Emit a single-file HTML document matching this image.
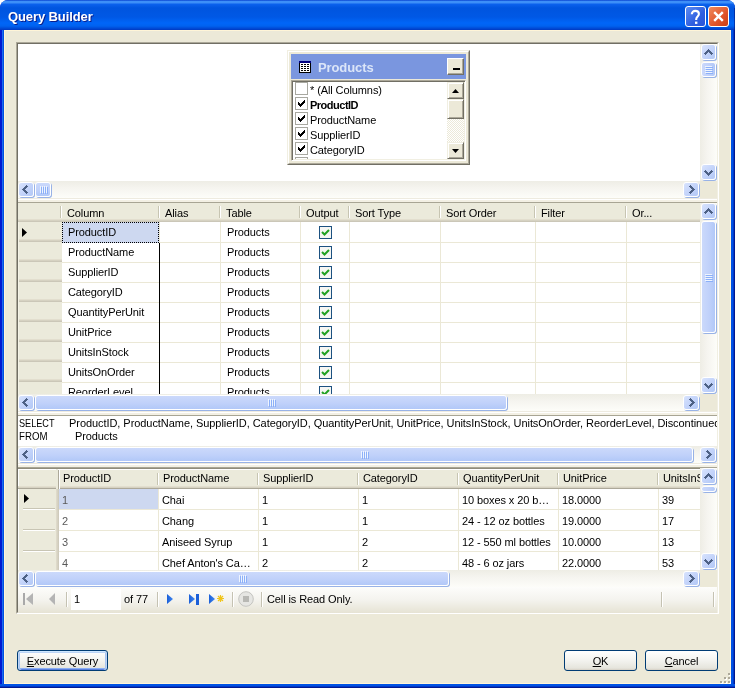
<!DOCTYPE html><html><head><meta charset="utf-8"><style>
*{margin:0;padding:0;box-sizing:border-box}
html,body{width:735px;height:688px;overflow:hidden;background:#fff}
body{position:relative;will-change:transform;font-family:"Liberation Sans",sans-serif;font-size:11px;color:#000}
div{position:absolute}
.t{white-space:pre;line-height:12px;letter-spacing:-0.1px}
.sb .sbi{border:1px solid #fff;border-radius:3px;background:linear-gradient(135deg,#d8e3fd 0%,#c4d4fa 50%,#b2c8f6 100%);box-shadow:1px 1px 0 #98b2e6}
.sb .sbi.th{background:linear-gradient(to bottom,#cbd9fb,#c0d1fa 55%,#b1c8f8)}
.sb .sbi.tv{background:linear-gradient(to right,#cbd9fb,#c0d1fa 55%,#b1c8f8)}
.vtrack{background:linear-gradient(to right,#eeede5,#f5f4ef 40%,#fdfdf9)}
.htrack{background:linear-gradient(to bottom,#eeede5,#f5f4ef 40%,#fdfdf9)}
.hdr{background:#ebeadb;border-bottom:3px solid #d6d2c2}
.btn{border:1px solid #003c74;border-radius:3px;background:linear-gradient(to bottom,#fff 0%,#f3f3ef 50%,#e6e5dd 90%,#d6d0c5 100%);text-align:center;line-height:19px}
</style></head><body><div style="left:0px;top:0px;width:735px;height:688px;background:linear-gradient(to right,#0019d0 0,#0019d0 2px,#1a6af0 2px,#1a6af0 3px,#0050e0 3px,#0050e0 731px,#0052e4 731px,#0052e4 733px,#0038c8 733px,#0038c8 734px,#001890 734px);border-radius:8px 8px 0 0;"></div><div style="left:0px;top:684px;width:735px;height:4px;background:linear-gradient(to bottom,#0052e4 0,#0052e4 2px,#0038c8 2px,#0038c8 3px,#001890 3px);"></div><div style="left:0px;top:0px;width:735px;height:30px;border-radius:8px 8px 0 0;background:linear-gradient(to bottom,#0842d0 0px,#3d8ff8 1.5px,#3d8ff8 2.5px,#0a60ec 4.5px,#0055df 8px,#0058e5 17px,#0066f8 23px,#0062f0 26px,#0044cf 29px,#0038c0 30px);"></div><div style="left:734px;top:8px;width:1px;height:22px;background:rgba(0,16,120,0.55);"></div><div style="left:4px;top:30px;width:727px;height:654px;background:#ece9d8;border:1px solid #fff5d8;"></div><div class="t" style="left:8px;top:9px;font-size:13px;font-weight:bold;color:#fff;line-height:15px;text-shadow:1px 1px 0 #0a1e8c;">Query Builder</div><div style="left:685px;top:6px;width:21px;height:21px;border:1px solid #fff;border-radius:3px;background:linear-gradient(135deg,#5c8cf2,#2f5fe0 60%,#2a55d8);"><svg width="19" height="19" viewBox="0 0 19 19" style="position:absolute;left:0;top:0"><path d="M5.8 7.2 C5.8 5 7.4 3.9 9.3 3.9 C11.4 3.9 12.9 5.1 12.9 7 C12.9 9.3 10.2 9.6 10.2 12.2 V13" fill="none" stroke="#fff" stroke-width="2.1"/><rect x="9" y="14.6" width="2.4" height="2.3" fill="#fff"/></svg></div><div style="left:708px;top:6px;width:21px;height:21px;border:1px solid #fff;border-radius:3px;background:linear-gradient(135deg,#f08a5c,#e0542a 60%,#cc3e14);"><svg width="19" height="19" viewBox="0 0 19 19" style="position:absolute;left:0;top:0"><path d="M5.2 5.2 L13.8 13.8 M13.8 5.2 L5.2 13.8" stroke="#fff" stroke-width="2.4"/></svg></div><div style="left:16px;top:42px;width:703px;height:572px;border-top:1px solid #aca899;border-left:1px solid #aca899;border-right:1px solid #fff;border-bottom:1px solid #fff;"></div><div style="left:17px;top:43px;width:701px;height:570px;border-top:1px solid #716f64;border-left:1px solid #716f64;border-right:1px solid #f1efe2;border-bottom:1px solid #f1efe2;background:#ece9d8;"></div><div style="left:18px;top:44px;width:699px;height:137px;background:#fff;"></div><div class="vtrack" style="left:700px;top:44px;width:17px;height:137px;"></div><div class="sb" style="left:700px;top:44px;width:17px;height:17px;"><div class="sbi" style="left:1px;top:0;width:15px;height:16px;"></div><div style="left:4px;top:5px;width:9px;height:6px"><svg width="9" height="6" viewBox="0 0 9 6" style="position:absolute;left:0;top:0"><g fill="#4d6185" shape-rendering="crispEdges"><rect x="4" y="0" width="1" height="1"/><rect x="3" y="1" width="1" height="1"/><rect x="4" y="1" width="1" height="1"/><rect x="5" y="1" width="1" height="1"/><rect x="2" y="2" width="1" height="1"/><rect x="3" y="2" width="1" height="1"/><rect x="4" y="2" width="1" height="1"/><rect x="5" y="2" width="1" height="1"/><rect x="6" y="2" width="1" height="1"/><rect x="1" y="3" width="1" height="1"/><rect x="2" y="3" width="1" height="1"/><rect x="3" y="3" width="1" height="1"/><rect x="5" y="3" width="1" height="1"/><rect x="6" y="3" width="1" height="1"/><rect x="7" y="3" width="1" height="1"/><rect x="0" y="4" width="1" height="1"/><rect x="1" y="4" width="1" height="1"/><rect x="2" y="4" width="1" height="1"/><rect x="6" y="4" width="1" height="1"/><rect x="7" y="4" width="1" height="1"/><rect x="8" y="4" width="1" height="1"/><rect x="1" y="5" width="1" height="1"/><rect x="7" y="5" width="1" height="1"/></g></svg></div></div><div class="sb" style="left:700px;top:164px;width:17px;height:17px;"><div class="sbi" style="left:1px;top:0;width:15px;height:16px;"></div><div style="left:4px;top:6px;width:9px;height:6px"><svg width="9" height="6" viewBox="0 0 9 6" style="position:absolute;left:0;top:0"><g fill="#4d6185" shape-rendering="crispEdges"><rect x="1" y="0" width="1" height="1"/><rect x="7" y="0" width="1" height="1"/><rect x="0" y="1" width="1" height="1"/><rect x="1" y="1" width="1" height="1"/><rect x="2" y="1" width="1" height="1"/><rect x="6" y="1" width="1" height="1"/><rect x="7" y="1" width="1" height="1"/><rect x="8" y="1" width="1" height="1"/><rect x="1" y="2" width="1" height="1"/><rect x="2" y="2" width="1" height="1"/><rect x="3" y="2" width="1" height="1"/><rect x="5" y="2" width="1" height="1"/><rect x="6" y="2" width="1" height="1"/><rect x="7" y="2" width="1" height="1"/><rect x="2" y="3" width="1" height="1"/><rect x="3" y="3" width="1" height="1"/><rect x="4" y="3" width="1" height="1"/><rect x="5" y="3" width="1" height="1"/><rect x="6" y="3" width="1" height="1"/><rect x="3" y="4" width="1" height="1"/><rect x="4" y="4" width="1" height="1"/><rect x="5" y="4" width="1" height="1"/><rect x="4" y="5" width="1" height="1"/></g></svg></div></div><div class="sb" style="left:700px;top:62px;width:17px;height:16px;"><div class="sbi tv" style="left:1px;top:0;width:15px;height:15px;"></div><div style="left:5px;top:4px;width:8px;height:8px"><svg width="8" height="8" viewBox="0 0 8 8" style="position:absolute;left:0;top:0"><g shape-rendering="crispEdges"><path d="M0 0.5h7M0 2.5h7M0 4.5h7M0 6.5h7" stroke="#eef4fe" stroke-width="1"/><path d="M1 1.5h7M1 3.5h7M1 5.5h7M1 7.5h7" stroke="#8cb0f8" stroke-width="1"/></g></svg></div></div><div class="htrack" style="left:18px;top:181px;width:682px;height:17px;"></div><div class="sb" style="left:18px;top:181px;width:17px;height:17px;"><div class="sbi" style="left:0;top:1px;width:16px;height:15px;"></div><div style="left:4px;top:4px;width:6px;height:9px"><svg width="6" height="9" viewBox="0 0 6 9" style="position:absolute;left:0;top:0"><g fill="#4d6185" shape-rendering="crispEdges"><rect x="4" y="0" width="1" height="1"/><rect x="3" y="1" width="1" height="1"/><rect x="4" y="1" width="1" height="1"/><rect x="5" y="1" width="1" height="1"/><rect x="2" y="2" width="1" height="1"/><rect x="3" y="2" width="1" height="1"/><rect x="4" y="2" width="1" height="1"/><rect x="1" y="3" width="1" height="1"/><rect x="2" y="3" width="1" height="1"/><rect x="3" y="3" width="1" height="1"/><rect x="0" y="4" width="1" height="1"/><rect x="1" y="4" width="1" height="1"/><rect x="2" y="4" width="1" height="1"/><rect x="1" y="5" width="1" height="1"/><rect x="2" y="5" width="1" height="1"/><rect x="3" y="5" width="1" height="1"/><rect x="2" y="6" width="1" height="1"/><rect x="3" y="6" width="1" height="1"/><rect x="4" y="6" width="1" height="1"/><rect x="3" y="7" width="1" height="1"/><rect x="4" y="7" width="1" height="1"/><rect x="5" y="7" width="1" height="1"/><rect x="4" y="8" width="1" height="1"/></g></svg></div></div><div class="sb" style="left:683px;top:181px;width:17px;height:17px;"><div class="sbi" style="left:0;top:1px;width:16px;height:15px;"></div><div style="left:6px;top:4px;width:6px;height:9px"><svg width="6" height="9" viewBox="0 0 6 9" style="position:absolute;left:0;top:0"><g fill="#4d6185" shape-rendering="crispEdges"><rect x="1" y="0" width="1" height="1"/><rect x="0" y="1" width="1" height="1"/><rect x="1" y="1" width="1" height="1"/><rect x="2" y="1" width="1" height="1"/><rect x="1" y="2" width="1" height="1"/><rect x="2" y="2" width="1" height="1"/><rect x="3" y="2" width="1" height="1"/><rect x="2" y="3" width="1" height="1"/><rect x="3" y="3" width="1" height="1"/><rect x="4" y="3" width="1" height="1"/><rect x="3" y="4" width="1" height="1"/><rect x="4" y="4" width="1" height="1"/><rect x="5" y="4" width="1" height="1"/><rect x="2" y="5" width="1" height="1"/><rect x="3" y="5" width="1" height="1"/><rect x="4" y="5" width="1" height="1"/><rect x="1" y="6" width="1" height="1"/><rect x="2" y="6" width="1" height="1"/><rect x="3" y="6" width="1" height="1"/><rect x="0" y="7" width="1" height="1"/><rect x="1" y="7" width="1" height="1"/><rect x="2" y="7" width="1" height="1"/><rect x="1" y="8" width="1" height="1"/></g></svg></div></div><div class="sb" style="left:35px;top:181px;width:17px;height:17px;"><div class="sbi th" style="left:0;top:1px;width:16px;height:15px;"></div><div style="left:5px;top:5px;width:8px;height:8px"><svg width="8" height="8" viewBox="0 0 8 8" style="position:absolute;left:0;top:0"><g shape-rendering="crispEdges"><path d="M0.5 0v7M2.5 0v7M4.5 0v7M6.5 0v7" stroke="#eef4fe" stroke-width="1"/><path d="M1.5 1v7M3.5 1v7M5.5 1v7M7.5 1v7" stroke="#8cb0f8" stroke-width="1"/></g></svg></div></div><div style="left:700px;top:181px;width:17px;height:17px;background:#ece9d8;"></div><div style="left:18px;top:198px;width:699px;height:1px;background:#eeebe0;"></div><div style="left:18px;top:199px;width:699px;height:1px;background:#fff;"></div><div style="left:18px;top:200px;width:699px;height:2px;background:#f3f0e4;"></div><div style="left:18px;top:202px;width:699px;height:1px;background:#a8a594;"></div><div style="left:287px;top:50px;width:183px;height:115px;background:#ece9d8;border-top:1px solid #f1efe2;border-left:1px solid #f1efe2;border-right:1px solid #716f64;border-bottom:1px solid #716f64;"></div><div style="left:288px;top:51px;width:181px;height:113px;border-top:1px solid #fff;border-left:1px solid #fff;border-right:1px solid #aca899;border-bottom:1px solid #aca899;"></div><div style="left:291px;top:54px;width:175px;height:25px;background:#7a96df;"></div><svg style="position:absolute;left:299px;top:61px" width="12" height="12" viewBox="0 0 12 12" shape-rendering="crispEdges"><rect x="0" y="0" width="12" height="12" fill="#000"/><rect x="1" y="2" width="10" height="9" fill="#fff"/><rect x="0" y="0" width="12" height="2" fill="#000080"/><g fill="#000"><rect x="2" y="3" width="2" height="1"/><rect x="2" y="5" width="2" height="1"/><rect x="2" y="7" width="2" height="1"/><rect x="2" y="9" width="2" height="1"/><rect x="5" y="3" width="2" height="1"/><rect x="5" y="5" width="2" height="1"/><rect x="5" y="7" width="2" height="1"/><rect x="5" y="9" width="2" height="1"/><rect x="8" y="3" width="2" height="1"/><rect x="8" y="5" width="2" height="1"/><rect x="8" y="7" width="2" height="1"/><rect x="8" y="9" width="2" height="1"/></g></svg><div class="t" style="left:318px;top:60px;font-size:13px;font-weight:bold;color:#dbe5f8;line-height:15px;">Products</div><div style="left:447px;top:58px;width:17px;height:17px;background:#ece9d8;border-top:1px solid #fff;border-left:1px solid #fff;border-right:1px solid #716f64;border-bottom:1px solid #716f64;box-shadow:inset -1px -1px 0 #aca899;"><div style="left:5px;top:9px;width:7px;height:2px;background:#000"></div></div><div style="left:291px;top:80px;width:175px;height:81px;background:#fff;border-top:1px solid #aca899;border-left:1px solid #aca899;border-right:1px solid #fff;border-bottom:1px solid #fff;box-shadow:inset 1px 1px 0 #716f64,inset -1px -1px 0 #f1efe2;"></div><div style="left:293px;top:82px;width:154px;height:77px;overflow:hidden;"><div style="left:2px;top:0px;width:13px;height:13px;overflow:hidden"><svg width="13" height="13" viewBox="0 0 13 13"><rect x="0.5" y="0.5" width="12" height="12" fill="#fff" stroke="#a8a8a0"/></svg></div><div class="t" style="left:17px;top:2px;">* (All Columns)</div><div style="left:2px;top:15px;width:13px;height:13px;overflow:hidden"><svg width="13" height="13" viewBox="0 0 13 13"><rect x="0.5" y="0.5" width="12" height="12" fill="#fff" stroke="#a8a8a0"/><g fill="#000" shape-rendering="crispEdges"><rect x="9" y="3" width="1" height="1"/><rect x="8" y="4" width="1" height="1"/><rect x="9" y="4" width="1" height="1"/><rect x="3" y="5" width="1" height="1"/><rect x="7" y="5" width="1" height="1"/><rect x="8" y="5" width="1" height="1"/><rect x="9" y="5" width="1" height="1"/><rect x="3" y="6" width="1" height="1"/><rect x="4" y="6" width="1" height="1"/><rect x="6" y="6" width="1" height="1"/><rect x="7" y="6" width="1" height="1"/><rect x="8" y="6" width="1" height="1"/><rect x="3" y="7" width="1" height="1"/><rect x="4" y="7" width="1" height="1"/><rect x="5" y="7" width="1" height="1"/><rect x="6" y="7" width="1" height="1"/><rect x="7" y="7" width="1" height="1"/><rect x="4" y="8" width="1" height="1"/><rect x="5" y="8" width="1" height="1"/><rect x="6" y="8" width="1" height="1"/><rect x="5" y="9" width="1" height="1"/></g></svg></div><div class="t" style="left:17px;top:17px;font-weight:bold;letter-spacing:-0.5px;">ProductID</div><div style="left:2px;top:30px;width:13px;height:13px;overflow:hidden"><svg width="13" height="13" viewBox="0 0 13 13"><rect x="0.5" y="0.5" width="12" height="12" fill="#fff" stroke="#a8a8a0"/><g fill="#000" shape-rendering="crispEdges"><rect x="9" y="3" width="1" height="1"/><rect x="8" y="4" width="1" height="1"/><rect x="9" y="4" width="1" height="1"/><rect x="3" y="5" width="1" height="1"/><rect x="7" y="5" width="1" height="1"/><rect x="8" y="5" width="1" height="1"/><rect x="9" y="5" width="1" height="1"/><rect x="3" y="6" width="1" height="1"/><rect x="4" y="6" width="1" height="1"/><rect x="6" y="6" width="1" height="1"/><rect x="7" y="6" width="1" height="1"/><rect x="8" y="6" width="1" height="1"/><rect x="3" y="7" width="1" height="1"/><rect x="4" y="7" width="1" height="1"/><rect x="5" y="7" width="1" height="1"/><rect x="6" y="7" width="1" height="1"/><rect x="7" y="7" width="1" height="1"/><rect x="4" y="8" width="1" height="1"/><rect x="5" y="8" width="1" height="1"/><rect x="6" y="8" width="1" height="1"/><rect x="5" y="9" width="1" height="1"/></g></svg></div><div class="t" style="left:17px;top:32px;">ProductName</div><div style="left:2px;top:45px;width:13px;height:13px;overflow:hidden"><svg width="13" height="13" viewBox="0 0 13 13"><rect x="0.5" y="0.5" width="12" height="12" fill="#fff" stroke="#a8a8a0"/><g fill="#000" shape-rendering="crispEdges"><rect x="9" y="3" width="1" height="1"/><rect x="8" y="4" width="1" height="1"/><rect x="9" y="4" width="1" height="1"/><rect x="3" y="5" width="1" height="1"/><rect x="7" y="5" width="1" height="1"/><rect x="8" y="5" width="1" height="1"/><rect x="9" y="5" width="1" height="1"/><rect x="3" y="6" width="1" height="1"/><rect x="4" y="6" width="1" height="1"/><rect x="6" y="6" width="1" height="1"/><rect x="7" y="6" width="1" height="1"/><rect x="8" y="6" width="1" height="1"/><rect x="3" y="7" width="1" height="1"/><rect x="4" y="7" width="1" height="1"/><rect x="5" y="7" width="1" height="1"/><rect x="6" y="7" width="1" height="1"/><rect x="7" y="7" width="1" height="1"/><rect x="4" y="8" width="1" height="1"/><rect x="5" y="8" width="1" height="1"/><rect x="6" y="8" width="1" height="1"/><rect x="5" y="9" width="1" height="1"/></g></svg></div><div class="t" style="left:17px;top:47px;">SupplierID</div><div style="left:2px;top:60px;width:13px;height:13px;overflow:hidden"><svg width="13" height="13" viewBox="0 0 13 13"><rect x="0.5" y="0.5" width="12" height="12" fill="#fff" stroke="#a8a8a0"/><g fill="#000" shape-rendering="crispEdges"><rect x="9" y="3" width="1" height="1"/><rect x="8" y="4" width="1" height="1"/><rect x="9" y="4" width="1" height="1"/><rect x="3" y="5" width="1" height="1"/><rect x="7" y="5" width="1" height="1"/><rect x="8" y="5" width="1" height="1"/><rect x="9" y="5" width="1" height="1"/><rect x="3" y="6" width="1" height="1"/><rect x="4" y="6" width="1" height="1"/><rect x="6" y="6" width="1" height="1"/><rect x="7" y="6" width="1" height="1"/><rect x="8" y="6" width="1" height="1"/><rect x="3" y="7" width="1" height="1"/><rect x="4" y="7" width="1" height="1"/><rect x="5" y="7" width="1" height="1"/><rect x="6" y="7" width="1" height="1"/><rect x="7" y="7" width="1" height="1"/><rect x="4" y="8" width="1" height="1"/><rect x="5" y="8" width="1" height="1"/><rect x="6" y="8" width="1" height="1"/><rect x="5" y="9" width="1" height="1"/></g></svg></div><div class="t" style="left:17px;top:62px;">CategoryID</div><div style="left:2px;top:75px;width:13px;height:13px;overflow:hidden"><svg width="13" height="13" viewBox="0 0 13 13"><rect x="0.5" y="0.5" width="12" height="12" fill="#fff" stroke="#a8a8a0"/><g fill="#000" shape-rendering="crispEdges"><rect x="9" y="3" width="1" height="1"/><rect x="8" y="4" width="1" height="1"/><rect x="9" y="4" width="1" height="1"/><rect x="3" y="5" width="1" height="1"/><rect x="7" y="5" width="1" height="1"/><rect x="8" y="5" width="1" height="1"/><rect x="9" y="5" width="1" height="1"/><rect x="3" y="6" width="1" height="1"/><rect x="4" y="6" width="1" height="1"/><rect x="6" y="6" width="1" height="1"/><rect x="7" y="6" width="1" height="1"/><rect x="8" y="6" width="1" height="1"/><rect x="3" y="7" width="1" height="1"/><rect x="4" y="7" width="1" height="1"/><rect x="5" y="7" width="1" height="1"/><rect x="6" y="7" width="1" height="1"/><rect x="7" y="7" width="1" height="1"/><rect x="4" y="8" width="1" height="1"/><rect x="5" y="8" width="1" height="1"/><rect x="6" y="8" width="1" height="1"/><rect x="5" y="9" width="1" height="1"/></g></svg></div></div><div style="left:447px;top:82px;width:17px;height:77px;background-color:#f5f4ee;background-image:repeating-conic-gradient(#ece9d8 0 25%,#fff 0 50%);background-size:2px 2px;"></div><div style="left:447px;top:82px;width:17px;height:17px;background:#ece9d8;border-top:1px solid #f1efe2;border-left:1px solid #f1efe2;border-right:1px solid #716f64;border-bottom:1px solid #716f64;box-shadow:inset 1px 1px 0 #fff,inset -1px -1px 0 #aca899;"><svg style="position:absolute;left:4px;top:6px" width="7" height="4" viewBox="0 0 7 4"><path d="M3.5 0 L7 4 L0 4Z" fill="#000"/></svg></div><div style="left:447px;top:99px;width:17px;height:20px;background:#ece9d8;border-top:1px solid #f1efe2;border-left:1px solid #f1efe2;border-right:1px solid #716f64;border-bottom:1px solid #716f64;box-shadow:inset 1px 1px 0 #fff,inset -1px -1px 0 #aca899;"></div><div style="left:447px;top:142px;width:17px;height:17px;background:#ece9d8;border-top:1px solid #f1efe2;border-left:1px solid #f1efe2;border-right:1px solid #716f64;border-bottom:1px solid #716f64;box-shadow:inset 1px 1px 0 #fff,inset -1px -1px 0 #aca899;"><svg style="position:absolute;left:4px;top:6px" width="7" height="4" viewBox="0 0 7 4"><path d="M0 0 L7 0 L3.5 4Z" fill="#000"/></svg></div><div style="left:18px;top:203px;width:682px;height:191px;overflow:hidden;"><div style="left:0px;top:0px;width:682px;height:191px;background:#fff;"></div><div style="left:0px;top:0px;width:682px;height:16px;background:#ebeadb;"></div><div style="left:0px;top:16px;width:682px;height:1px;background:#e2dece;"></div><div style="left:0px;top:17px;width:682px;height:1px;background:#d6d2c2;"></div><div style="left:0px;top:18px;width:682px;height:1px;background:#cbc7b8;"></div><div style="left:42px;top:3px;width:1px;height:12px;background:#c7c5b2;"></div><div style="left:43px;top:3px;width:1px;height:12px;background:#fff;"></div><div class="t" style="left:49px;top:4px;">Column</div><div style="left:140px;top:3px;width:1px;height:12px;background:#c7c5b2;"></div><div style="left:141px;top:3px;width:1px;height:12px;background:#fff;"></div><div class="t" style="left:147px;top:4px;">Alias</div><div style="left:201px;top:3px;width:1px;height:12px;background:#c7c5b2;"></div><div style="left:202px;top:3px;width:1px;height:12px;background:#fff;"></div><div class="t" style="left:208px;top:4px;">Table</div><div style="left:281px;top:3px;width:1px;height:12px;background:#c7c5b2;"></div><div style="left:282px;top:3px;width:1px;height:12px;background:#fff;"></div><div class="t" style="left:288px;top:4px;">Output</div><div style="left:330px;top:3px;width:1px;height:12px;background:#c7c5b2;"></div><div style="left:331px;top:3px;width:1px;height:12px;background:#fff;"></div><div class="t" style="left:337px;top:4px;">Sort Type</div><div style="left:421px;top:3px;width:1px;height:12px;background:#c7c5b2;"></div><div style="left:422px;top:3px;width:1px;height:12px;background:#fff;"></div><div class="t" style="left:428px;top:4px;">Sort Order</div><div style="left:516px;top:3px;width:1px;height:12px;background:#c7c5b2;"></div><div style="left:517px;top:3px;width:1px;height:12px;background:#fff;"></div><div class="t" style="left:523px;top:4px;">Filter</div><div style="left:607px;top:3px;width:1px;height:12px;background:#c7c5b2;"></div><div style="left:608px;top:3px;width:1px;height:12px;background:#fff;"></div><div class="t" style="left:614px;top:4px;">Or...</div><div style="left:0px;top:19px;width:44px;height:20px;background:#ebeadb;"></div><div style="left:0px;top:19px;width:1px;height:20px;background:#f5f3e6;"></div><div style="left:1px;top:36px;width:43px;height:1px;background:#e2dece;"></div><div style="left:1px;top:37px;width:43px;height:1px;background:#d6d2c2;"></div><div style="left:1px;top:38px;width:43px;height:1px;background:#cbc7b8;"></div><div style="left:44px;top:39px;width:638px;height:1px;background:#ebe8d6;"></div><div class="t" style="left:50px;top:23px;">ProductID</div><div class="t" style="left:209px;top:23px;">Products</div><div style="left:301px;top:23px;width:13px;height:13px"><svg width="13" height="13" viewBox="0 0 13 13"><rect x="0.5" y="0.5" width="12" height="12" fill="#f6f6f3" stroke="#1c5180"/><path d="M3 6 L5.5 8.5 L10 4" fill="none" stroke="#21a121" stroke-width="2"/></svg></div><div style="left:0px;top:39px;width:44px;height:20px;background:#ebeadb;"></div><div style="left:0px;top:39px;width:1px;height:20px;background:#f5f3e6;"></div><div style="left:1px;top:56px;width:43px;height:1px;background:#e2dece;"></div><div style="left:1px;top:57px;width:43px;height:1px;background:#d6d2c2;"></div><div style="left:1px;top:58px;width:43px;height:1px;background:#cbc7b8;"></div><div style="left:44px;top:59px;width:638px;height:1px;background:#ebe8d6;"></div><div class="t" style="left:50px;top:43px;">ProductName</div><div class="t" style="left:209px;top:43px;">Products</div><div style="left:301px;top:43px;width:13px;height:13px"><svg width="13" height="13" viewBox="0 0 13 13"><rect x="0.5" y="0.5" width="12" height="12" fill="#f6f6f3" stroke="#1c5180"/><path d="M3 6 L5.5 8.5 L10 4" fill="none" stroke="#21a121" stroke-width="2"/></svg></div><div style="left:0px;top:59px;width:44px;height:20px;background:#ebeadb;"></div><div style="left:0px;top:59px;width:1px;height:20px;background:#f5f3e6;"></div><div style="left:1px;top:76px;width:43px;height:1px;background:#e2dece;"></div><div style="left:1px;top:77px;width:43px;height:1px;background:#d6d2c2;"></div><div style="left:1px;top:78px;width:43px;height:1px;background:#cbc7b8;"></div><div style="left:44px;top:79px;width:638px;height:1px;background:#ebe8d6;"></div><div class="t" style="left:50px;top:63px;">SupplierID</div><div class="t" style="left:209px;top:63px;">Products</div><div style="left:301px;top:63px;width:13px;height:13px"><svg width="13" height="13" viewBox="0 0 13 13"><rect x="0.5" y="0.5" width="12" height="12" fill="#f6f6f3" stroke="#1c5180"/><path d="M3 6 L5.5 8.5 L10 4" fill="none" stroke="#21a121" stroke-width="2"/></svg></div><div style="left:0px;top:79px;width:44px;height:20px;background:#ebeadb;"></div><div style="left:0px;top:79px;width:1px;height:20px;background:#f5f3e6;"></div><div style="left:1px;top:96px;width:43px;height:1px;background:#e2dece;"></div><div style="left:1px;top:97px;width:43px;height:1px;background:#d6d2c2;"></div><div style="left:1px;top:98px;width:43px;height:1px;background:#cbc7b8;"></div><div style="left:44px;top:99px;width:638px;height:1px;background:#ebe8d6;"></div><div class="t" style="left:50px;top:83px;">CategoryID</div><div class="t" style="left:209px;top:83px;">Products</div><div style="left:301px;top:83px;width:13px;height:13px"><svg width="13" height="13" viewBox="0 0 13 13"><rect x="0.5" y="0.5" width="12" height="12" fill="#f6f6f3" stroke="#1c5180"/><path d="M3 6 L5.5 8.5 L10 4" fill="none" stroke="#21a121" stroke-width="2"/></svg></div><div style="left:0px;top:99px;width:44px;height:20px;background:#ebeadb;"></div><div style="left:0px;top:99px;width:1px;height:20px;background:#f5f3e6;"></div><div style="left:1px;top:116px;width:43px;height:1px;background:#e2dece;"></div><div style="left:1px;top:117px;width:43px;height:1px;background:#d6d2c2;"></div><div style="left:1px;top:118px;width:43px;height:1px;background:#cbc7b8;"></div><div style="left:44px;top:119px;width:638px;height:1px;background:#ebe8d6;"></div><div class="t" style="left:50px;top:103px;">QuantityPerUnit</div><div class="t" style="left:209px;top:103px;">Products</div><div style="left:301px;top:103px;width:13px;height:13px"><svg width="13" height="13" viewBox="0 0 13 13"><rect x="0.5" y="0.5" width="12" height="12" fill="#f6f6f3" stroke="#1c5180"/><path d="M3 6 L5.5 8.5 L10 4" fill="none" stroke="#21a121" stroke-width="2"/></svg></div><div style="left:0px;top:119px;width:44px;height:20px;background:#ebeadb;"></div><div style="left:0px;top:119px;width:1px;height:20px;background:#f5f3e6;"></div><div style="left:1px;top:136px;width:43px;height:1px;background:#e2dece;"></div><div style="left:1px;top:137px;width:43px;height:1px;background:#d6d2c2;"></div><div style="left:1px;top:138px;width:43px;height:1px;background:#cbc7b8;"></div><div style="left:44px;top:139px;width:638px;height:1px;background:#ebe8d6;"></div><div class="t" style="left:50px;top:123px;">UnitPrice</div><div class="t" style="left:209px;top:123px;">Products</div><div style="left:301px;top:123px;width:13px;height:13px"><svg width="13" height="13" viewBox="0 0 13 13"><rect x="0.5" y="0.5" width="12" height="12" fill="#f6f6f3" stroke="#1c5180"/><path d="M3 6 L5.5 8.5 L10 4" fill="none" stroke="#21a121" stroke-width="2"/></svg></div><div style="left:0px;top:139px;width:44px;height:20px;background:#ebeadb;"></div><div style="left:0px;top:139px;width:1px;height:20px;background:#f5f3e6;"></div><div style="left:1px;top:156px;width:43px;height:1px;background:#e2dece;"></div><div style="left:1px;top:157px;width:43px;height:1px;background:#d6d2c2;"></div><div style="left:1px;top:158px;width:43px;height:1px;background:#cbc7b8;"></div><div style="left:44px;top:159px;width:638px;height:1px;background:#ebe8d6;"></div><div class="t" style="left:50px;top:143px;">UnitsInStock</div><div class="t" style="left:209px;top:143px;">Products</div><div style="left:301px;top:143px;width:13px;height:13px"><svg width="13" height="13" viewBox="0 0 13 13"><rect x="0.5" y="0.5" width="12" height="12" fill="#f6f6f3" stroke="#1c5180"/><path d="M3 6 L5.5 8.5 L10 4" fill="none" stroke="#21a121" stroke-width="2"/></svg></div><div style="left:0px;top:159px;width:44px;height:20px;background:#ebeadb;"></div><div style="left:0px;top:159px;width:1px;height:20px;background:#f5f3e6;"></div><div style="left:1px;top:176px;width:43px;height:1px;background:#e2dece;"></div><div style="left:1px;top:177px;width:43px;height:1px;background:#d6d2c2;"></div><div style="left:1px;top:178px;width:43px;height:1px;background:#cbc7b8;"></div><div style="left:44px;top:179px;width:638px;height:1px;background:#ebe8d6;"></div><div class="t" style="left:50px;top:163px;">UnitsOnOrder</div><div class="t" style="left:209px;top:163px;">Products</div><div style="left:301px;top:163px;width:13px;height:13px"><svg width="13" height="13" viewBox="0 0 13 13"><rect x="0.5" y="0.5" width="12" height="12" fill="#f6f6f3" stroke="#1c5180"/><path d="M3 6 L5.5 8.5 L10 4" fill="none" stroke="#21a121" stroke-width="2"/></svg></div><div style="left:0px;top:179px;width:44px;height:20px;background:#ebeadb;"></div><div style="left:0px;top:179px;width:1px;height:20px;background:#f5f3e6;"></div><div style="left:1px;top:196px;width:43px;height:1px;background:#e2dece;"></div><div style="left:1px;top:197px;width:43px;height:1px;background:#d6d2c2;"></div><div style="left:1px;top:198px;width:43px;height:1px;background:#cbc7b8;"></div><div style="left:44px;top:199px;width:638px;height:1px;background:#ebe8d6;"></div><div class="t" style="left:50px;top:183px;">ReorderLevel</div><div class="t" style="left:209px;top:183px;">Products</div><div style="left:301px;top:183px;width:13px;height:13px"><svg width="13" height="13" viewBox="0 0 13 13"><rect x="0.5" y="0.5" width="12" height="12" fill="#f6f6f3" stroke="#1c5180"/><path d="M3 6 L5.5 8.5 L10 4" fill="none" stroke="#21a121" stroke-width="2"/></svg></div><div style="left:141px;top:19px;width:1px;height:172px;background:#ebe8d6;"></div><div style="left:202px;top:19px;width:1px;height:172px;background:#ebe8d6;"></div><div style="left:282px;top:19px;width:1px;height:172px;background:#ebe8d6;"></div><div style="left:331px;top:19px;width:1px;height:172px;background:#ebe8d6;"></div><div style="left:422px;top:19px;width:1px;height:172px;background:#ebe8d6;"></div><div style="left:517px;top:19px;width:1px;height:172px;background:#ebe8d6;"></div><div style="left:608px;top:19px;width:1px;height:172px;background:#ebe8d6;"></div><div style="left:44px;top:19px;width:97px;height:21px;background:#cdd8f0;border:1px dotted #000;"><div class="t" style="left:5px;top:3px">ProductID</div></div><div style="left:141px;top:40px;width:1px;height:151px;background:#000;"></div><svg style="position:absolute;left:4px;top:25px" width="6" height="10" viewBox="0 0 6 10"><path d="M0 0 L5 4.5 L0 9Z" fill="#000"/></svg></div><div class="vtrack" style="left:700px;top:203px;width:17px;height:191px;"></div><div class="sb" style="left:700px;top:203px;width:17px;height:17px;"><div class="sbi" style="left:1px;top:0;width:15px;height:16px;"></div><div style="left:4px;top:5px;width:9px;height:6px"><svg width="9" height="6" viewBox="0 0 9 6" style="position:absolute;left:0;top:0"><g fill="#4d6185" shape-rendering="crispEdges"><rect x="4" y="0" width="1" height="1"/><rect x="3" y="1" width="1" height="1"/><rect x="4" y="1" width="1" height="1"/><rect x="5" y="1" width="1" height="1"/><rect x="2" y="2" width="1" height="1"/><rect x="3" y="2" width="1" height="1"/><rect x="4" y="2" width="1" height="1"/><rect x="5" y="2" width="1" height="1"/><rect x="6" y="2" width="1" height="1"/><rect x="1" y="3" width="1" height="1"/><rect x="2" y="3" width="1" height="1"/><rect x="3" y="3" width="1" height="1"/><rect x="5" y="3" width="1" height="1"/><rect x="6" y="3" width="1" height="1"/><rect x="7" y="3" width="1" height="1"/><rect x="0" y="4" width="1" height="1"/><rect x="1" y="4" width="1" height="1"/><rect x="2" y="4" width="1" height="1"/><rect x="6" y="4" width="1" height="1"/><rect x="7" y="4" width="1" height="1"/><rect x="8" y="4" width="1" height="1"/><rect x="1" y="5" width="1" height="1"/><rect x="7" y="5" width="1" height="1"/></g></svg></div></div><div class="sb" style="left:700px;top:377px;width:17px;height:17px;"><div class="sbi" style="left:1px;top:0;width:15px;height:16px;"></div><div style="left:4px;top:6px;width:9px;height:6px"><svg width="9" height="6" viewBox="0 0 9 6" style="position:absolute;left:0;top:0"><g fill="#4d6185" shape-rendering="crispEdges"><rect x="1" y="0" width="1" height="1"/><rect x="7" y="0" width="1" height="1"/><rect x="0" y="1" width="1" height="1"/><rect x="1" y="1" width="1" height="1"/><rect x="2" y="1" width="1" height="1"/><rect x="6" y="1" width="1" height="1"/><rect x="7" y="1" width="1" height="1"/><rect x="8" y="1" width="1" height="1"/><rect x="1" y="2" width="1" height="1"/><rect x="2" y="2" width="1" height="1"/><rect x="3" y="2" width="1" height="1"/><rect x="5" y="2" width="1" height="1"/><rect x="6" y="2" width="1" height="1"/><rect x="7" y="2" width="1" height="1"/><rect x="2" y="3" width="1" height="1"/><rect x="3" y="3" width="1" height="1"/><rect x="4" y="3" width="1" height="1"/><rect x="5" y="3" width="1" height="1"/><rect x="6" y="3" width="1" height="1"/><rect x="3" y="4" width="1" height="1"/><rect x="4" y="4" width="1" height="1"/><rect x="5" y="4" width="1" height="1"/><rect x="4" y="5" width="1" height="1"/></g></svg></div></div><div class="sb" style="left:700px;top:221px;width:17px;height:113px;"><div class="sbi tv" style="left:1px;top:0;width:15px;height:112px;"></div><div style="left:5px;top:53px;width:8px;height:8px"><svg width="8" height="8" viewBox="0 0 8 8" style="position:absolute;left:0;top:0"><g shape-rendering="crispEdges"><path d="M0 0.5h7M0 2.5h7M0 4.5h7M0 6.5h7" stroke="#eef4fe" stroke-width="1"/><path d="M1 1.5h7M1 3.5h7M1 5.5h7M1 7.5h7" stroke="#8cb0f8" stroke-width="1"/></g></svg></div></div><div class="htrack" style="left:18px;top:394px;width:682px;height:17px;"></div><div class="sb" style="left:18px;top:394px;width:17px;height:17px;"><div class="sbi" style="left:0;top:1px;width:16px;height:15px;"></div><div style="left:4px;top:4px;width:6px;height:9px"><svg width="6" height="9" viewBox="0 0 6 9" style="position:absolute;left:0;top:0"><g fill="#4d6185" shape-rendering="crispEdges"><rect x="4" y="0" width="1" height="1"/><rect x="3" y="1" width="1" height="1"/><rect x="4" y="1" width="1" height="1"/><rect x="5" y="1" width="1" height="1"/><rect x="2" y="2" width="1" height="1"/><rect x="3" y="2" width="1" height="1"/><rect x="4" y="2" width="1" height="1"/><rect x="1" y="3" width="1" height="1"/><rect x="2" y="3" width="1" height="1"/><rect x="3" y="3" width="1" height="1"/><rect x="0" y="4" width="1" height="1"/><rect x="1" y="4" width="1" height="1"/><rect x="2" y="4" width="1" height="1"/><rect x="1" y="5" width="1" height="1"/><rect x="2" y="5" width="1" height="1"/><rect x="3" y="5" width="1" height="1"/><rect x="2" y="6" width="1" height="1"/><rect x="3" y="6" width="1" height="1"/><rect x="4" y="6" width="1" height="1"/><rect x="3" y="7" width="1" height="1"/><rect x="4" y="7" width="1" height="1"/><rect x="5" y="7" width="1" height="1"/><rect x="4" y="8" width="1" height="1"/></g></svg></div></div><div class="sb" style="left:683px;top:394px;width:17px;height:17px;"><div class="sbi" style="left:0;top:1px;width:16px;height:15px;"></div><div style="left:6px;top:4px;width:6px;height:9px"><svg width="6" height="9" viewBox="0 0 6 9" style="position:absolute;left:0;top:0"><g fill="#4d6185" shape-rendering="crispEdges"><rect x="1" y="0" width="1" height="1"/><rect x="0" y="1" width="1" height="1"/><rect x="1" y="1" width="1" height="1"/><rect x="2" y="1" width="1" height="1"/><rect x="1" y="2" width="1" height="1"/><rect x="2" y="2" width="1" height="1"/><rect x="3" y="2" width="1" height="1"/><rect x="2" y="3" width="1" height="1"/><rect x="3" y="3" width="1" height="1"/><rect x="4" y="3" width="1" height="1"/><rect x="3" y="4" width="1" height="1"/><rect x="4" y="4" width="1" height="1"/><rect x="5" y="4" width="1" height="1"/><rect x="2" y="5" width="1" height="1"/><rect x="3" y="5" width="1" height="1"/><rect x="4" y="5" width="1" height="1"/><rect x="1" y="6" width="1" height="1"/><rect x="2" y="6" width="1" height="1"/><rect x="3" y="6" width="1" height="1"/><rect x="0" y="7" width="1" height="1"/><rect x="1" y="7" width="1" height="1"/><rect x="2" y="7" width="1" height="1"/><rect x="1" y="8" width="1" height="1"/></g></svg></div></div><div class="sb" style="left:35px;top:394px;width:473px;height:17px;"><div class="sbi th" style="left:0;top:1px;width:472px;height:15px;"></div><div style="left:233px;top:5px;width:8px;height:8px"><svg width="8" height="8" viewBox="0 0 8 8" style="position:absolute;left:0;top:0"><g shape-rendering="crispEdges"><path d="M0.5 0v7M2.5 0v7M4.5 0v7M6.5 0v7" stroke="#eef4fe" stroke-width="1"/><path d="M1.5 1v7M3.5 1v7M5.5 1v7M7.5 1v7" stroke="#8cb0f8" stroke-width="1"/></g></svg></div></div><div style="left:700px;top:394px;width:17px;height:17px;background:#ece9d8;"></div><div style="left:18px;top:411px;width:699px;height:1px;background:#eeebe0;"></div><div style="left:18px;top:412px;width:699px;height:1px;background:#fff;"></div><div style="left:18px;top:413px;width:699px;height:2px;background:#f3f0e4;"></div><div style="left:18px;top:415px;width:699px;height:1px;background:#a8a594;"></div><div style="left:18px;top:416px;width:699px;height:30px;background:#fff;overflow:hidden;"><div class="t" style="left:1px;top:1px;line-height:13px;letter-spacing:0;transform:scaleX(0.83);transform-origin:0 0">SELECT</div><div class="t" style="left:51px;top:1px;line-height:13px;letter-spacing:-0.06px">ProductID, ProductName, SupplierID, CategoryID, QuantityPerUnit, UnitPrice, UnitsInStock, UnitsOnOrder, ReorderLevel, Discontinued</div><div class="t" style="left:1px;top:14px;line-height:13px;letter-spacing:0;transform:scaleX(0.88);transform-origin:0 0">FROM</div><div class="t" style="left:57px;top:14px;line-height:13px">Products</div></div><div class="htrack" style="left:18px;top:446px;width:699px;height:17px;"></div><div class="sb" style="left:18px;top:446px;width:17px;height:17px;"><div class="sbi" style="left:0;top:1px;width:16px;height:15px;"></div><div style="left:4px;top:4px;width:6px;height:9px"><svg width="6" height="9" viewBox="0 0 6 9" style="position:absolute;left:0;top:0"><g fill="#4d6185" shape-rendering="crispEdges"><rect x="4" y="0" width="1" height="1"/><rect x="3" y="1" width="1" height="1"/><rect x="4" y="1" width="1" height="1"/><rect x="5" y="1" width="1" height="1"/><rect x="2" y="2" width="1" height="1"/><rect x="3" y="2" width="1" height="1"/><rect x="4" y="2" width="1" height="1"/><rect x="1" y="3" width="1" height="1"/><rect x="2" y="3" width="1" height="1"/><rect x="3" y="3" width="1" height="1"/><rect x="0" y="4" width="1" height="1"/><rect x="1" y="4" width="1" height="1"/><rect x="2" y="4" width="1" height="1"/><rect x="1" y="5" width="1" height="1"/><rect x="2" y="5" width="1" height="1"/><rect x="3" y="5" width="1" height="1"/><rect x="2" y="6" width="1" height="1"/><rect x="3" y="6" width="1" height="1"/><rect x="4" y="6" width="1" height="1"/><rect x="3" y="7" width="1" height="1"/><rect x="4" y="7" width="1" height="1"/><rect x="5" y="7" width="1" height="1"/><rect x="4" y="8" width="1" height="1"/></g></svg></div></div><div class="sb" style="left:700px;top:446px;width:17px;height:17px;"><div class="sbi" style="left:0;top:1px;width:16px;height:15px;"></div><div style="left:6px;top:4px;width:6px;height:9px"><svg width="6" height="9" viewBox="0 0 6 9" style="position:absolute;left:0;top:0"><g fill="#4d6185" shape-rendering="crispEdges"><rect x="1" y="0" width="1" height="1"/><rect x="0" y="1" width="1" height="1"/><rect x="1" y="1" width="1" height="1"/><rect x="2" y="1" width="1" height="1"/><rect x="1" y="2" width="1" height="1"/><rect x="2" y="2" width="1" height="1"/><rect x="3" y="2" width="1" height="1"/><rect x="2" y="3" width="1" height="1"/><rect x="3" y="3" width="1" height="1"/><rect x="4" y="3" width="1" height="1"/><rect x="3" y="4" width="1" height="1"/><rect x="4" y="4" width="1" height="1"/><rect x="5" y="4" width="1" height="1"/><rect x="2" y="5" width="1" height="1"/><rect x="3" y="5" width="1" height="1"/><rect x="4" y="5" width="1" height="1"/><rect x="1" y="6" width="1" height="1"/><rect x="2" y="6" width="1" height="1"/><rect x="3" y="6" width="1" height="1"/><rect x="0" y="7" width="1" height="1"/><rect x="1" y="7" width="1" height="1"/><rect x="2" y="7" width="1" height="1"/><rect x="1" y="8" width="1" height="1"/></g></svg></div></div><div class="sb" style="left:35px;top:446px;width:659px;height:17px;"><div class="sbi th" style="left:0;top:1px;width:658px;height:15px;"></div><div style="left:326px;top:5px;width:8px;height:8px"><svg width="8" height="8" viewBox="0 0 8 8" style="position:absolute;left:0;top:0"><g shape-rendering="crispEdges"><path d="M0.5 0v7M2.5 0v7M4.5 0v7M6.5 0v7" stroke="#eef4fe" stroke-width="1"/><path d="M1.5 1v7M3.5 1v7M5.5 1v7M7.5 1v7" stroke="#8cb0f8" stroke-width="1"/></g></svg></div></div><div style="left:18px;top:463px;width:699px;height:1px;background:#eeebe0;"></div><div style="left:18px;top:464px;width:699px;height:1px;background:#fff;"></div><div style="left:18px;top:465px;width:699px;height:2px;background:#f3f0e4;"></div><div style="left:18px;top:467px;width:699px;height:1px;background:#a8a594;"></div><div style="left:18px;top:468px;width:699px;height:1px;background:#8f8c7c;"></div><div style="left:18px;top:469px;width:682px;height:101px;overflow:hidden;"><div style="left:0px;top:0px;width:682px;height:101px;background:#fff;"></div><div style="left:0px;top:0px;width:682px;height:1px;background:#fff;"></div><div style="left:0px;top:1px;width:682px;height:16px;background:#ebeadb;"></div><div style="left:0px;top:0px;width:1px;height:20px;background:#fff;"></div><div style="left:0px;top:17px;width:682px;height:1px;background:#e2dece;"></div><div style="left:0px;top:18px;width:682px;height:1px;background:#d6d2c2;"></div><div style="left:0px;top:19px;width:682px;height:1px;background:#aca899;"></div><div class="t" style="left:45px;top:3px;">ProductID</div><div style="left:139px;top:4px;width:1px;height:12px;background:#c7c5b2;"></div><div style="left:140px;top:4px;width:1px;height:12px;background:#fff;"></div><div class="t" style="left:145px;top:3px;">ProductName</div><div style="left:239px;top:4px;width:1px;height:12px;background:#c7c5b2;"></div><div style="left:240px;top:4px;width:1px;height:12px;background:#fff;"></div><div class="t" style="left:245px;top:3px;">SupplierID</div><div style="left:339px;top:4px;width:1px;height:12px;background:#c7c5b2;"></div><div style="left:340px;top:4px;width:1px;height:12px;background:#fff;"></div><div class="t" style="left:345px;top:3px;">CategoryID</div><div style="left:439px;top:4px;width:1px;height:12px;background:#c7c5b2;"></div><div style="left:440px;top:4px;width:1px;height:12px;background:#fff;"></div><div class="t" style="left:445px;top:3px;">QuantityPerUnit</div><div style="left:539px;top:4px;width:1px;height:12px;background:#c7c5b2;"></div><div style="left:540px;top:4px;width:1px;height:12px;background:#fff;"></div><div class="t" style="left:545px;top:3px;">UnitPrice</div><div style="left:639px;top:4px;width:1px;height:12px;background:#c7c5b2;"></div><div style="left:640px;top:4px;width:1px;height:12px;background:#fff;"></div><div class="t" style="left:645px;top:3px;">UnitsInStock</div><div style="left:0px;top:20px;width:41px;height:21px;background:#ebeadb;"></div><div style="left:0px;top:20px;width:1px;height:21px;background:#fff;"></div><div style="left:5px;top:39px;width:32px;height:1px;background:#c8c5b4;"></div><div style="left:5px;top:40px;width:32px;height:1px;background:#fff;"></div><div style="left:41px;top:20px;width:99px;height:20px;background:#cdd8f0;"></div><div style="left:40px;top:40px;width:642px;height:1px;background:#ebe8d6;"></div><div class="t" style="left:44px;top:25px;color:#5a5a5a;">1</div><div class="t" style="left:144px;top:25px;color:#000;">Chai</div><div class="t" style="left:244px;top:25px;color:#000;">1</div><div class="t" style="left:344px;top:25px;color:#000;">1</div><div class="t" style="left:444px;top:25px;color:#000;">10 boxes x 20 b…</div><div class="t" style="left:544px;top:25px;color:#000;">18.0000</div><div class="t" style="left:644px;top:25px;color:#000;">39</div><div style="left:0px;top:41px;width:41px;height:21px;background:#ebeadb;"></div><div style="left:0px;top:41px;width:1px;height:21px;background:#fff;"></div><div style="left:5px;top:60px;width:32px;height:1px;background:#c8c5b4;"></div><div style="left:5px;top:61px;width:32px;height:1px;background:#fff;"></div><div style="left:40px;top:61px;width:642px;height:1px;background:#ebe8d6;"></div><div class="t" style="left:44px;top:46px;color:#5a5a5a;">2</div><div class="t" style="left:144px;top:46px;color:#000;">Chang</div><div class="t" style="left:244px;top:46px;color:#000;">1</div><div class="t" style="left:344px;top:46px;color:#000;">1</div><div class="t" style="left:444px;top:46px;color:#000;">24 - 12 oz bottles</div><div class="t" style="left:544px;top:46px;color:#000;">19.0000</div><div class="t" style="left:644px;top:46px;color:#000;">17</div><div style="left:0px;top:62px;width:41px;height:21px;background:#ebeadb;"></div><div style="left:0px;top:62px;width:1px;height:21px;background:#fff;"></div><div style="left:5px;top:81px;width:32px;height:1px;background:#c8c5b4;"></div><div style="left:5px;top:82px;width:32px;height:1px;background:#fff;"></div><div style="left:40px;top:82px;width:642px;height:1px;background:#ebe8d6;"></div><div class="t" style="left:44px;top:67px;color:#5a5a5a;">3</div><div class="t" style="left:144px;top:67px;color:#000;">Aniseed Syrup</div><div class="t" style="left:244px;top:67px;color:#000;">1</div><div class="t" style="left:344px;top:67px;color:#000;">2</div><div class="t" style="left:444px;top:67px;color:#000;">12 - 550 ml bottles</div><div class="t" style="left:544px;top:67px;color:#000;">10.0000</div><div class="t" style="left:644px;top:67px;color:#000;">13</div><div style="left:0px;top:83px;width:41px;height:21px;background:#ebeadb;"></div><div style="left:0px;top:83px;width:1px;height:21px;background:#fff;"></div><div style="left:5px;top:102px;width:32px;height:1px;background:#c8c5b4;"></div><div style="left:5px;top:103px;width:32px;height:1px;background:#fff;"></div><div style="left:40px;top:103px;width:642px;height:1px;background:#ebe8d6;"></div><div class="t" style="left:44px;top:88px;color:#5a5a5a;">4</div><div class="t" style="left:144px;top:88px;color:#000;">Chef Anton's Ca…</div><div class="t" style="left:244px;top:88px;color:#000;">2</div><div class="t" style="left:344px;top:88px;color:#000;">2</div><div class="t" style="left:444px;top:88px;color:#000;">48 - 6 oz jars</div><div class="t" style="left:544px;top:88px;color:#000;">22.0000</div><div class="t" style="left:644px;top:88px;color:#000;">53</div><div style="left:38px;top:20px;width:3px;height:81px;background:linear-gradient(to right,#e2dece,#cbc7b8);"></div><div style="left:38px;top:0px;width:2px;height:20px;background:#ebeadb;"></div><div style="left:40px;top:1px;width:1px;height:19px;background:#aca899;"></div><div style="left:41px;top:1px;width:1px;height:19px;background:#fff;"></div><div style="left:140px;top:20px;width:1px;height:81px;background:#ebe8d6;"></div><div style="left:240px;top:20px;width:1px;height:81px;background:#ebe8d6;"></div><div style="left:340px;top:20px;width:1px;height:81px;background:#ebe8d6;"></div><div style="left:440px;top:20px;width:1px;height:81px;background:#ebe8d6;"></div><div style="left:540px;top:20px;width:1px;height:81px;background:#ebe8d6;"></div><div style="left:640px;top:20px;width:1px;height:81px;background:#ebe8d6;"></div><svg style="position:absolute;left:6px;top:25px" width="6" height="10" viewBox="0 0 6 10"><path d="M0 0 L5 4.5 L0 9Z" fill="#000"/></svg></div><div class="vtrack" style="left:700px;top:468px;width:17px;height:102px;"></div><div class="sb" style="left:700px;top:468px;width:17px;height:17px;"><div class="sbi" style="left:1px;top:0;width:15px;height:16px;"></div><div style="left:4px;top:5px;width:9px;height:6px"><svg width="9" height="6" viewBox="0 0 9 6" style="position:absolute;left:0;top:0"><g fill="#4d6185" shape-rendering="crispEdges"><rect x="4" y="0" width="1" height="1"/><rect x="3" y="1" width="1" height="1"/><rect x="4" y="1" width="1" height="1"/><rect x="5" y="1" width="1" height="1"/><rect x="2" y="2" width="1" height="1"/><rect x="3" y="2" width="1" height="1"/><rect x="4" y="2" width="1" height="1"/><rect x="5" y="2" width="1" height="1"/><rect x="6" y="2" width="1" height="1"/><rect x="1" y="3" width="1" height="1"/><rect x="2" y="3" width="1" height="1"/><rect x="3" y="3" width="1" height="1"/><rect x="5" y="3" width="1" height="1"/><rect x="6" y="3" width="1" height="1"/><rect x="7" y="3" width="1" height="1"/><rect x="0" y="4" width="1" height="1"/><rect x="1" y="4" width="1" height="1"/><rect x="2" y="4" width="1" height="1"/><rect x="6" y="4" width="1" height="1"/><rect x="7" y="4" width="1" height="1"/><rect x="8" y="4" width="1" height="1"/><rect x="1" y="5" width="1" height="1"/><rect x="7" y="5" width="1" height="1"/></g></svg></div></div><div class="sb" style="left:700px;top:553px;width:17px;height:17px;"><div class="sbi" style="left:1px;top:0;width:15px;height:16px;"></div><div style="left:4px;top:6px;width:9px;height:6px"><svg width="9" height="6" viewBox="0 0 9 6" style="position:absolute;left:0;top:0"><g fill="#4d6185" shape-rendering="crispEdges"><rect x="1" y="0" width="1" height="1"/><rect x="7" y="0" width="1" height="1"/><rect x="0" y="1" width="1" height="1"/><rect x="1" y="1" width="1" height="1"/><rect x="2" y="1" width="1" height="1"/><rect x="6" y="1" width="1" height="1"/><rect x="7" y="1" width="1" height="1"/><rect x="8" y="1" width="1" height="1"/><rect x="1" y="2" width="1" height="1"/><rect x="2" y="2" width="1" height="1"/><rect x="3" y="2" width="1" height="1"/><rect x="5" y="2" width="1" height="1"/><rect x="6" y="2" width="1" height="1"/><rect x="7" y="2" width="1" height="1"/><rect x="2" y="3" width="1" height="1"/><rect x="3" y="3" width="1" height="1"/><rect x="4" y="3" width="1" height="1"/><rect x="5" y="3" width="1" height="1"/><rect x="6" y="3" width="1" height="1"/><rect x="3" y="4" width="1" height="1"/><rect x="4" y="4" width="1" height="1"/><rect x="5" y="4" width="1" height="1"/><rect x="4" y="5" width="1" height="1"/></g></svg></div></div><div class="sb" style="left:700px;top:486px;width:17px;height:7px;"><div class="sbi tv" style="left:1px;top:0;width:15px;height:6px;"></div></div><div class="htrack" style="left:18px;top:570px;width:682px;height:17px;"></div><div class="sb" style="left:18px;top:570px;width:17px;height:17px;"><div class="sbi" style="left:0;top:1px;width:16px;height:15px;"></div><div style="left:4px;top:4px;width:6px;height:9px"><svg width="6" height="9" viewBox="0 0 6 9" style="position:absolute;left:0;top:0"><g fill="#4d6185" shape-rendering="crispEdges"><rect x="4" y="0" width="1" height="1"/><rect x="3" y="1" width="1" height="1"/><rect x="4" y="1" width="1" height="1"/><rect x="5" y="1" width="1" height="1"/><rect x="2" y="2" width="1" height="1"/><rect x="3" y="2" width="1" height="1"/><rect x="4" y="2" width="1" height="1"/><rect x="1" y="3" width="1" height="1"/><rect x="2" y="3" width="1" height="1"/><rect x="3" y="3" width="1" height="1"/><rect x="0" y="4" width="1" height="1"/><rect x="1" y="4" width="1" height="1"/><rect x="2" y="4" width="1" height="1"/><rect x="1" y="5" width="1" height="1"/><rect x="2" y="5" width="1" height="1"/><rect x="3" y="5" width="1" height="1"/><rect x="2" y="6" width="1" height="1"/><rect x="3" y="6" width="1" height="1"/><rect x="4" y="6" width="1" height="1"/><rect x="3" y="7" width="1" height="1"/><rect x="4" y="7" width="1" height="1"/><rect x="5" y="7" width="1" height="1"/><rect x="4" y="8" width="1" height="1"/></g></svg></div></div><div class="sb" style="left:683px;top:570px;width:17px;height:17px;"><div class="sbi" style="left:0;top:1px;width:16px;height:15px;"></div><div style="left:6px;top:4px;width:6px;height:9px"><svg width="6" height="9" viewBox="0 0 6 9" style="position:absolute;left:0;top:0"><g fill="#4d6185" shape-rendering="crispEdges"><rect x="1" y="0" width="1" height="1"/><rect x="0" y="1" width="1" height="1"/><rect x="1" y="1" width="1" height="1"/><rect x="2" y="1" width="1" height="1"/><rect x="1" y="2" width="1" height="1"/><rect x="2" y="2" width="1" height="1"/><rect x="3" y="2" width="1" height="1"/><rect x="2" y="3" width="1" height="1"/><rect x="3" y="3" width="1" height="1"/><rect x="4" y="3" width="1" height="1"/><rect x="3" y="4" width="1" height="1"/><rect x="4" y="4" width="1" height="1"/><rect x="5" y="4" width="1" height="1"/><rect x="2" y="5" width="1" height="1"/><rect x="3" y="5" width="1" height="1"/><rect x="4" y="5" width="1" height="1"/><rect x="1" y="6" width="1" height="1"/><rect x="2" y="6" width="1" height="1"/><rect x="3" y="6" width="1" height="1"/><rect x="0" y="7" width="1" height="1"/><rect x="1" y="7" width="1" height="1"/><rect x="2" y="7" width="1" height="1"/><rect x="1" y="8" width="1" height="1"/></g></svg></div></div><div class="sb" style="left:35px;top:570px;width:415px;height:17px;"><div class="sbi th" style="left:0;top:1px;width:414px;height:15px;"></div><div style="left:204px;top:5px;width:8px;height:8px"><svg width="8" height="8" viewBox="0 0 8 8" style="position:absolute;left:0;top:0"><g shape-rendering="crispEdges"><path d="M0.5 0v7M2.5 0v7M4.5 0v7M6.5 0v7" stroke="#eef4fe" stroke-width="1"/><path d="M1.5 1v7M3.5 1v7M5.5 1v7M7.5 1v7" stroke="#8cb0f8" stroke-width="1"/></g></svg></div></div><div style="left:700px;top:570px;width:17px;height:17px;background:#ece9d8;"></div><div style="left:18px;top:587px;width:699px;height:26px;background:linear-gradient(to bottom,#fdfdfb,#f4f3ee 50%,#e6e3d4);"></div><svg style="position:absolute;left:23px;top:593px" width="10" height="12" viewBox="0 0 10 12"><rect x="0" y="0" width="2" height="12" fill="#a9a9a9"/><path d="M10 0 L3 6 L10 12Z" fill="#b4b4b4"/></svg><svg style="position:absolute;left:49px;top:593px" width="6" height="12" viewBox="0 0 6 12"><path d="M6 0 L0 6 L6 12Z" fill="#b4b4b4"/></svg><div style="left:66px;top:592px;width:1px;height:15px;background:#c5c2b2;"></div><div style="left:67px;top:592px;width:1px;height:15px;background:#fff;"></div><div style="left:71px;top:589px;width:50px;height:21px;background:#fff;"><div class="t" style="left:3px;top:4px">1</div></div><div class="t" style="left:124px;top:593px;">of 77</div><div style="left:157px;top:592px;width:1px;height:15px;background:#c5c2b2;"></div><div style="left:158px;top:592px;width:1px;height:15px;background:#fff;"></div><svg style="position:absolute;left:167px;top:594px" width="7" height="10" viewBox="0 0 7 10"><defs><linearGradient id="bg1" x1="0" y1="0" x2="1" y2="0"><stop offset="0" stop-color="#1b5fd8"/><stop offset="1" stop-color="#3f86f0"/></linearGradient></defs><path d="M0 0 L6 5 L0 10Z" fill="url(#bg1)"/></svg><svg style="position:absolute;left:189px;top:594px" width="11" height="11" viewBox="0 0 11 11"><path d="M0 0 L6 5 L0 10Z" fill="url(#bg1)"/><rect x="7" y="0" width="3" height="11" fill="#1b5fd8"/></svg><svg style="position:absolute;left:209px;top:594px" width="16" height="10" viewBox="0 0 16 10"><path d="M0 0 L6 5 L0 10Z" fill="url(#bg1)"/><path d="M11.5 1v7M8 4.5h7M9 2l5 5M14 2l-5 5" stroke="#f0c419" stroke-width="1.2"/></svg><div style="left:232px;top:592px;width:1px;height:15px;background:#c5c2b2;"></div><div style="left:233px;top:592px;width:1px;height:15px;background:#fff;"></div><svg style="position:absolute;left:238px;top:591px" width="16" height="16" viewBox="0 0 16 16"><circle cx="8" cy="8" r="7.3" fill="#e6e6e3" stroke="#c4c4c0" stroke-width="1"/><rect x="5" y="5" width="6" height="6" fill="#b8b8b4"/></svg><div style="left:261px;top:592px;width:1px;height:15px;background:#c5c2b2;"></div><div style="left:262px;top:592px;width:1px;height:15px;background:#fff;"></div><div class="t" style="left:267px;top:593px;">Cell is Read Only.</div><div style="left:661px;top:592px;width:1px;height:15px;background:#c5c2b2;"></div><div style="left:662px;top:592px;width:1px;height:15px;background:#fff;"></div><div style="left:713px;top:592px;width:1px;height:15px;background:#c5c2b2;"></div><div style="left:714px;top:592px;width:1px;height:15px;background:#fff;"></div><div class="btn" style="left:17px;top:650px;width:91px;height:21px;box-shadow:inset 0 1px 0 #cee7ff,inset 0 2px 0 #bcd4f6,inset 1px 0 0 #bcd4f6,inset 2px 0 0 #a8c4f0,inset -1px 0 0 #bcd4f6,inset -2px 0 0 #a8c4f0,inset 0 -1px 0 #5a7edc,inset 0 -2px 0 #89adf4;"><div class="t" style="left:0;width:89px;top:4px;text-align:center"><u>E</u>xecute Query</div></div><div class="btn" style="left:564px;top:650px;width:73px;height:21px;"><div class="t" style="left:0;width:71px;top:4px;text-align:center"><u>O</u>K</div></div><div class="btn" style="left:645px;top:650px;width:73px;height:21px;"><div class="t" style="left:0;width:71px;top:4px;text-align:center"><u>C</u>ancel</div></div><div style="left:729px;top:674px;width:2px;height:2px;background:#fff;"></div><div style="left:728px;top:673px;width:2px;height:2px;background:#aca899;"></div><div style="left:725px;top:678px;width:2px;height:2px;background:#fff;"></div><div style="left:724px;top:677px;width:2px;height:2px;background:#aca899;"></div><div style="left:729px;top:678px;width:2px;height:2px;background:#fff;"></div><div style="left:728px;top:677px;width:2px;height:2px;background:#aca899;"></div><div style="left:721px;top:682px;width:2px;height:2px;background:#fff;"></div><div style="left:720px;top:681px;width:2px;height:2px;background:#aca899;"></div><div style="left:725px;top:682px;width:2px;height:2px;background:#fff;"></div><div style="left:724px;top:681px;width:2px;height:2px;background:#aca899;"></div><div style="left:729px;top:682px;width:2px;height:2px;background:#fff;"></div><div style="left:728px;top:681px;width:2px;height:2px;background:#aca899;"></div></body></html>
